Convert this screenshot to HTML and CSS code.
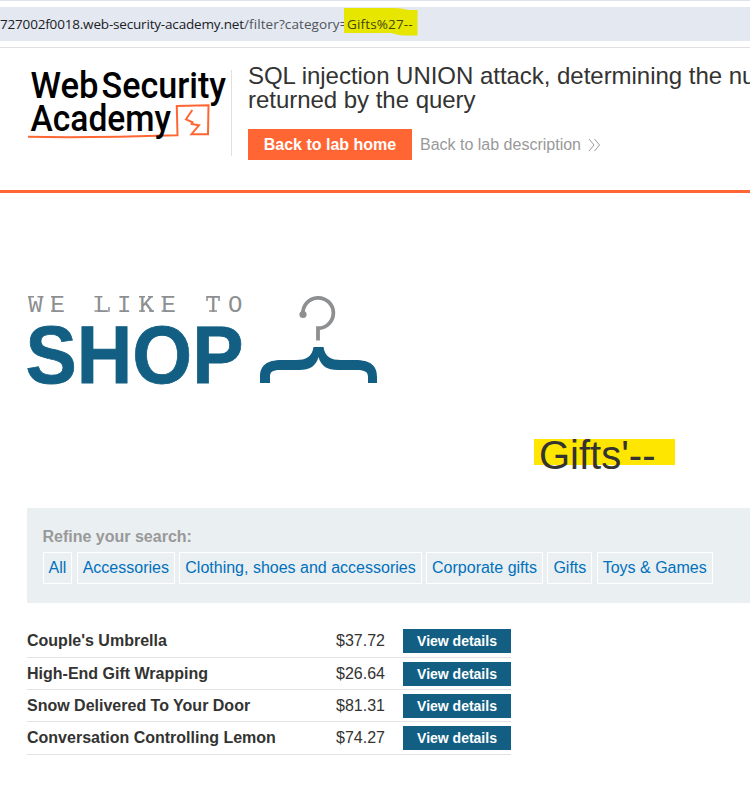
FILE: index.html
```html
<!DOCTYPE html>
<html lang="en">
<head>
<meta charset="utf-8">
<title>Web Security Academy shop</title>
<link rel="stylesheet" href="styles.css">
</head>
<body>
<div class="browser"><div class="address"><span class="host">727002f0018.web-security-academy.net</span><span class="path">/filter?category=</span><span class="query">Gifts%27--<svg class="marker" width="74" height="29" viewBox="0 0 74 29"><path d="M0 1H50Q58 1 64 3H73.500V28.500H60Q54 28 47 26H0Z" fill="#e6e600"/></svg></span></div></div>
<header class="lab">
  <svg class="logo" width="232" height="100" viewBox="0 60 232 100">
    <g font-family="Roboto" font-weight="500" font-size="37" fill="#000">
      <text x="30.500" y="98" textLength="68" lengthAdjust="spacingAndGlyphs">Web</text>
      <text x="101.500" y="98" textLength="124.500" lengthAdjust="spacingAndGlyphs">Security</text>
    </g>
    <path d="M28 136.800Q90 138 177.500 135.200L176.800 106L208.500 105.200L208 134.200H191.500L199 125.300L191.700 124L192.500 122.300L186 119.300L192.300 110" fill="none" stroke="#ff6633" stroke-width="2"/>
    <text x="30.500" y="131" font-family="Roboto" font-weight="500" font-size="37" textLength="140.500" lengthAdjust="spacingAndGlyphs">Academy</text>
  </svg>
  <div class="intro">
    <h2>SQL injection UNION attack, determining the nu<br>returned by the query</h2>
    <div class="actions"><a class="home">Back to lab home</a><a class="desc">Back to lab description</a><svg width="13" height="14" viewBox="0 0 13 14"><path d="M1 1L6 7L1 13M6.500 1L11.500 7L6.500 13" fill="none" stroke="#999" stroke-width="1"/></svg></div>
  </div>
</header>
<main>
  <svg class="shop" width="360" height="100" viewBox="20 290 360 100">
    <text class="tagline" x="28.300" y="311.700">WE LIKE TO</text>
    <path d="M28 296.800H34M37.500 296.800H43.500M51 296.800H56M51 311H56M94.500 296.800H102.500M94.500 311H101M139 296.800H145M139 311H145M148 296.800H153M149 311H154M161.500 296.800H167M161.500 311H167M209 311H217M207 296V301M219 296V301M109 307V311.700" fill="none" stroke="#8d8f91" stroke-width="1.500"/>
    <text x="25.500" y="383" font-family="Liberation Sans" font-weight="700" font-size="81" fill="#125f83" stroke="#125f83" stroke-width="0.800" textLength="218" lengthAdjust="spacingAndGlyphs">SHOP</text>
    <path d="M303 314A15.200 15.200 0 1 1 318 328.200V340.500" fill="none" stroke="#8d8f91" stroke-width="3.800"/>
    <circle cx="303" cy="314.500" r="3.600" fill="#8d8f91"/>
    <path d="M313.500 347H323.500C325 357 331 360 341 360H355C371 360 377 366 377 377V383H368V377C368 372 365 370 357 370H338C327 370 321 366 318.500 357C316 366 310 370 299 370H280C272 370 270 372 270 377V383H260V377C260 366 266 360 282 360H296C306 360 312 357 313.500 347Z" fill="#125f83"/>
  </svg>
  <h1><span>Gifts'--</span></h1>
  <section class="filters">
    <label>Refine your search:</label>
    <nav><a>All</a><a>Accessories</a><a>Clothing, shoes and accessories</a><a>Corporate gifts</a><a>Gifts</a><a>Toys &amp; Games</a></nav>
  </section>
  <div class="products">
    <div class="row"><b>Couple's Umbrella</b><span>$37.72</span><a>View details</a></div>
    <div class="row"><b>High-End Gift Wrapping</b><span>$26.64</span><a>View details</a></div>
    <div class="row"><b>Snow Delivered To Your Door</b><span>$81.31</span><a>View details</a></div>
    <div class="row"><b>Conversation Controlling Lemon</b><span>$74.27</span><a>View details</a></div>
  </div>
</main>
</body>
</html>
```
FILE: styles.css
```css
* { box-sizing: border-box; }
html, body { overflow: hidden; }
body { margin: 0; width: 750px; height: 788px; background: #fff; color: #333332; font: 16px/20px "Liberation Sans", Arial, sans-serif; }
svg { display: block; overflow: visible; }
.browser { height: 48px; padding-top: 6px; border-top: 1px solid #dde2ed; border-bottom: 1px solid #e0e0e0; }
.address { display: flex; height: 34px; line-height: 34px; background: #e3e8f1; font-family: "Open Sans", "Noto Sans", sans-serif; font-size: 13.5px; white-space: nowrap; color: #202124; }
.host { width: 244px; letter-spacing: -0.18px; }
.path { width: 103px; color: #50545a; letter-spacing: 0.1px; }
.query { position: relative; z-index: 0; color: #44460c; letter-spacing: 0.15px; }
.marker { position: absolute; left: -3px; top: 0; z-index: -1; }
.lab { display: flex; height: 145px; padding-top: 12px; border-bottom: 3px solid #ff6633; }
.logo { flex: none; }
.intro { margin-top: 10px; height: 86px; padding: 0 0 0 16px; margin-left: -1px; border-left: 1px solid #e0e0e0; white-space: nowrap; }
.intro h2 { margin: -6px 0 17px; font-size: 24px; line-height: 24px; font-weight: 400; letter-spacing: -0.03px; }
.actions { display: flex; align-items: center; height: 31px; color: #999; }
.home { width: 164px; height: 31px; margin-right: 8px; background: #ff6633; color: #fff; font-weight: 700; line-height: 31px; text-align: center; }
.actions svg { margin-left: 7px; }
main { padding: 97px 0 0 27px; }
.shop { margin-left: -7px; }
.tagline { font: 24px "Liberation Mono", monospace; letter-spacing: 7.8px; fill: #8d8f91; white-space: pre; }
h1 { margin: 46px 0 0 507px; height: 72px; font-weight: 400; font-size: 40px; line-height: 40px; }
h1 span { display: block; position: relative; top: 3px; width: 141px; height: 26px; padding-left: 5px; background: #ffe600; line-height: 33px; }
.filters { height: 95px; padding: 19px 15.5px; background: #eaeff2; }
.filters label { display: block; color: #999; font-weight: 700; }
.filters nav { display: flex; gap: 4.4px; margin-top: 5px; white-space: nowrap; }
.filters a { padding: 0 5px; border: 1px solid #fff; height: 32px; line-height: 30px; color: #0071bc; }
.products { width: 484px; padding-top: 22px; }
.row { display: grid; grid-template-columns: 309px 67px 108px; align-items: center; height: 32.2px; border-bottom: 1px solid #e3e3e3; }
.row:first-child { height: 33px; }
.row a { height: 24px; background: #125f83; color: #fff; font-size: 14px; font-weight: 700; line-height: 24px; text-align: center; }
```
